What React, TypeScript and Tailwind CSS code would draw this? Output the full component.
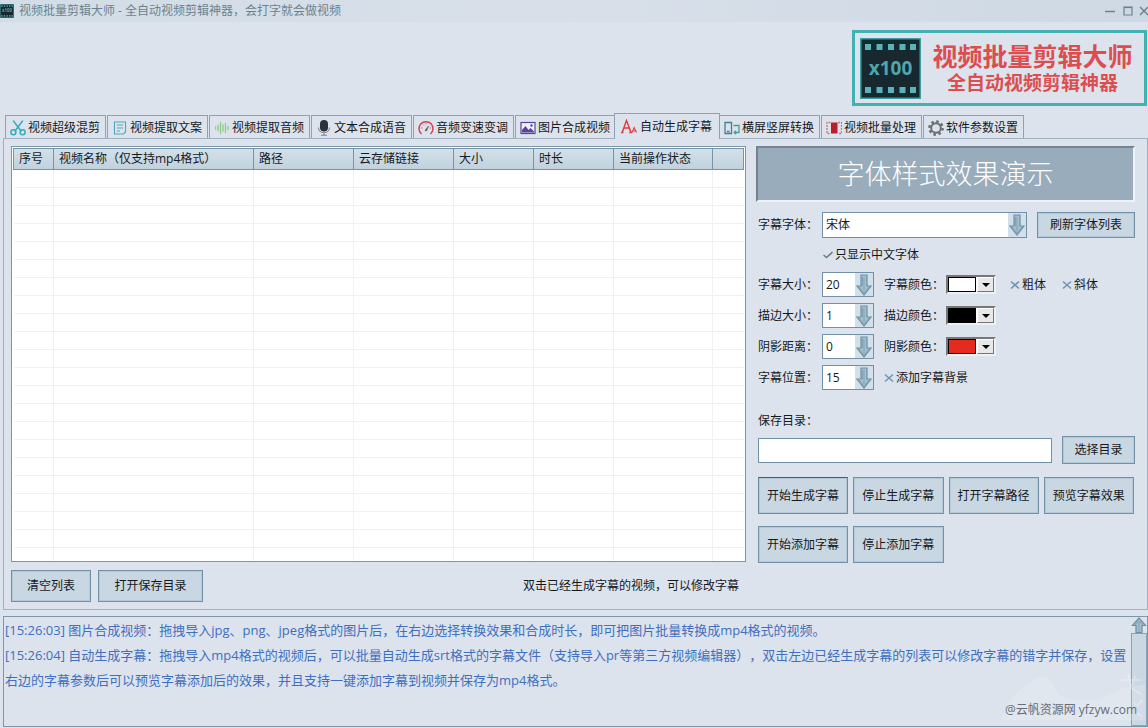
import { useState } from "react";
import type { ReactNode } from "react";

const frame = "border-[#7c97aa]";

function FilmLogo({ className }: { className: string }) {
  const holes = [5, 16.5, 28, 39.5, 50];
  return (
    <svg viewBox="0 0 61 61" className={className} aria-hidden="true">
      <rect x="0.75" y="0.75" width="59.5" height="59.5" fill="#17282f" stroke="#3c9fa3" strokeWidth="1.5" />
      {holes.map((x) => (
        <g key={x} fill="#58b4b8">
          <rect x={x} y="6" width="6" height="6" />
          <rect x={x} y="49" width="6" height="6" />
        </g>
      ))}
      <text x="30.5" y="37" textAnchor="middle" fontSize="19" fontWeight="700" fill="#4fa5ab">
        x100
      </text>
    </svg>
  );
}

const icons: Record<string, ReactNode> = {
  scissors: (
    <g fill="none" stroke="#35aebb" strokeWidth="1.5">
      <path d="M3.5 1 11 11M12.5 1 5 11" strokeLinecap="round" />
      <circle cx="3.4" cy="12.2" r="2.5" />
      <circle cx="12.6" cy="12.2" r="2.5" />
    </g>
  ),
  doc: (
    <g fill="none" stroke="#4aa9bd" strokeWidth="1.1">
      <path d="M2.5 2h11v10l-2 2h-9zM5 5h6M5 8h6M5 11h3" />
    </g>
  ),
  wave: (
    <path d="M1.5 7v2M4 5.5v5M6.5 2.5v11M9 5v6M11.5 3.5v9M14 6.5v3" stroke="#8fd08a" strokeWidth="1.4" strokeLinecap="round" />
  ),
  mic: (
    <g>
      <rect x="4" y="0" width="8" height="11.5" rx="4" fill="#2c3237" />
      <path d="M2.5 7.5c0 7 11 7 11 0M8 12.5V15M5 15.3h6" fill="none" stroke="#7b838a" strokeWidth="1.1" />
    </g>
  ),
  gauge: (
    <g fill="none" stroke="#cf4650">
      <path d="M3.5 14A7 7 0 1 1 12.5 14" strokeWidth="1.5" />
      <path d="M3 8h1.5M5 4.5l1 1M8 3v1.5M13 8h-1.5" strokeWidth="0.8" />
      <path d="M7 10.5 10.5 6 8.5 11z" fill="#555" stroke="#555" strokeWidth="0.6" />
    </g>
  ),
  image: (
    <g>
      <rect x="1" y="2.5" width="14" height="11" fill="#f0effa" stroke="#54479b" strokeWidth="1.2" />
      <path d="M2 12.5V10l3.5-4 3 4 2-2 3.5 3.5v1z" fill="#54479b" />
      <circle cx="11.5" cy="5.5" r="1.2" fill="#54479b" />
    </g>
  ),
  letters: (
    <g fill="none" stroke="#df3e3e">
      <path d="M1.2 13.5 5.5 1.5 10 13.5M2.8 9h5.4M0 13.5h2.5M8.3 13.5H11" strokeWidth="1.5" />
      <path d="M11 13.5 13.2 8.5 15.5 13.5M12 12h2.4" strokeWidth="1.1" />
    </g>
  ),
  screens: (
    <g fill="none" strokeWidth="1.3">
      <path d="M1 2.500h6.500v11H1zM3 11.500h2.500" stroke="#3d8297" />
      <path d="M9.500 5.500H15v7h-4.500M12 10.800 10.200 12.500 12 14.200" stroke="#45a193" />
    </g>
  ),
  film: (
    <g>
      <rect x="5" y="2.5" width="6.5" height="11" fill="#b81f2a" />
      <path d="M4.5 2.5H1v11h3.5M12 2.5h3.5v11H12" fill="none" stroke="#d9737a" strokeWidth="1.3" strokeDasharray="2 1" />
    </g>
  ),
  gear: (
    <g fill="none" stroke="#686c70">
      <circle cx="8" cy="8" r="4.8" strokeWidth="1.9" />
      <circle cx="8" cy="8" r="6.6" strokeWidth="2.4" strokeDasharray="2.6 2.583" />
    </g>
  ),
};

const tabs = [
  ["scissors", "视频超级混剪"],
  ["doc", "视频提取文案"],
  ["wave", "视频提取音频"],
  ["mic", "文本合成语音"],
  ["gauge", "音频变速变调"],
  ["image", "图片合成视频"],
  ["letters", "自动生成字幕"],
  ["screens", "横屏竖屏转换"],
  ["film", "视频批量处理"],
  ["gear", "软件参数设置"],
];

function TabBar() {
  const [active, setActive] = useState(6);
  return (
    <div role="tablist" className="flex items-end gap-px pl-[5px]">
      {tabs.map(([icon, label], i) => (
        <button
          key={label}
          type="button"
          role="tab"
          aria-selected={i === active}
          onClick={() => setActive(i)}
          className={
            i === active
              ? "relative z-10 -mr-0.5 -mb-px -ml-[3px] flex h-[26px] w-[106px] shrink-0 items-center gap-[3px] border border-b-0 border-[#8ba3b8] bg-[#dce3ec] pl-1.5 whitespace-nowrap"
              : "flex h-[23px] w-[101px] shrink-0 items-center gap-0.5 border border-b-0 border-[#8ba3b8] bg-[#dce3ec] pt-px pl-1 whitespace-nowrap"
          }
        >
          <svg viewBox="0 0 16 16" className="size-4 shrink-0" aria-hidden="true">
            {icons[icon]}
          </svg>
          {label}
        </button>
      ))}
    </div>
  );
}

const columns = [
  ["序号", "w-10"],
  ["视频名称（仅支持mp4格式）", "w-[200px]"],
  ["路径", "w-[100px]"],
  ["云存储链接", "w-[100px]"],
  ["大小", "w-20"],
  ["时长", "w-20"],
  ["当前操作状态", "w-[99px]"],
  ["", ""],
];

function VideoTable() {
  return (
    <div className={`h-[416px] overflow-hidden border bg-white p-px ${frame}`}>
      <table className="w-full table-fixed border-collapse">
        <thead>
          <tr className="h-[21px] bg-linear-to-b from-[#d3e0e9] to-[#c0d1dd]">
            {columns.map(([label, width]) => (
              <th
                key={label}
                scope="col"
                className={`border border-[#7793a8] p-0 pl-[5px] text-left font-normal whitespace-nowrap ${width}`}
              >
                {label}
              </th>
            ))}
          </tr>
        </thead>
        <tbody>
          {Array.from({ length: 22 }, (_, r) => (
            <tr key={r} className="h-[18px]">
              {columns.map(([label]) => (
                <td key={label} className="border-r border-b border-[#f0f1f3] p-0 last:border-r-0" />
              ))}
            </tr>
          ))}
        </tbody>
      </table>
    </div>
  );
}

function ActionButton({ children, className, strong }: { children: ReactNode; className: string; strong?: boolean }) {
  return (
    <button
      type="button"
      className={`shrink-0 border bg-[#c9d7e3] whitespace-nowrap shadow-[inset_1px_1px_0_#b4c9d7,inset_-1px_-1px_0_#b4c9d7] ${
        strong ? "border-[#6d8ba0] border-t-[#3f6269]" : "border-[#7391a6]"
      } ${className}`}
    >
      {children}
    </button>
  );
}

function Arrow({ className }: { className: string }) {
  return (
    <svg viewBox="0 0 16 22" className={className} aria-hidden="true">
      <path d="M5 1h6v11h4l-7 9-7-9h4z" fill="#a5bfce" stroke="#6c8fa3" strokeWidth="1.2" />
      <path d="M8 3v14M6.5 3v9M3 13l5 6 5-6" fill="none" stroke="#7e9fb2" strokeWidth="0.9" />
    </svg>
  );
}

function ScrollArrow() {
  return (
    <svg viewBox="0 0 16 16" className="size-4" aria-hidden="true">
      <path d="M8 1 14.5 8.500H11V15.500H5V8.500H1.500z" fill="#a5bfce" stroke="#6c8fa3" strokeWidth="1.2" />
      <path d="M8 4v11M4 8l4-4 4 4" fill="none" stroke="#7e9fb2" strokeWidth="0.9" />
    </svg>
  );
}

function DropDown({ id, options, className }: { id: string; options: string[]; className: string }) {
  return (
    <div className={`grid border border-[#7391a6] bg-white ${className}`}>
      <select id={id} className="col-start-1 row-start-1 w-full appearance-none bg-transparent pl-[3px] outline-none">
        {options.map((o) => (
          <option key={o}>{o}</option>
        ))}
      </select>
      <span className="pointer-events-none col-start-1 row-start-1 flex w-[18px] items-center justify-center justify-self-end bg-[#d2e0ea]">
        <Arrow className="h-[22px] w-4" />
      </span>
    </div>
  );
}

function ColorPicker({ id, swatch }: { id: string; swatch: string }) {
  return (
    <button
      id={id}
      type="button"
      className="flex h-[19px] w-[50px] border-2 border-t-[#777] border-r-[#eef0f2] border-b-[#eef0f2] border-l-[#777] bg-white"
    >
      <span className={`h-full w-7 border border-black ${swatch}`} />
      <span className="ml-px flex h-full flex-1 items-center justify-center border border-t-white border-r-[#777] border-b-[#777] border-l-white bg-[#e8e8e8]">
        <svg viewBox="0 0 8 4" className="h-1 w-2" aria-hidden="true">
          <path d="M0 0h8L4 4z" />
        </svg>
      </span>
    </button>
  );
}

function Tick({ label, initial = false }: { label: string; initial?: boolean }) {
  const [on, setOn] = useState(initial);
  return (
    <label className="flex items-center gap-0.5 whitespace-nowrap">
      <span className="grid size-[10px]">
        <input
          type="checkbox"
          checked={on}
          onChange={() => setOn(!on)}
          className="col-start-1 row-start-1 size-[10px] appearance-none"
        />
        <svg viewBox="0 0 10 10" className="pointer-events-none col-start-1 row-start-1 size-[10px]" aria-hidden="true">
          <path
            d={on ? "M0.5 5 3.5 7.5 9.5 2" : "M1 1.5 9 8.5M9 1.5 1 8.5"}
            fill="none"
            stroke={on ? "#62808c" : "#6d95b3"}
            strokeWidth="1.6"
          />
        </svg>
      </span>
      {label}
    </label>
  );
}

function SizeRow({ id, label, value, children }: { id: string; label: string; value: string; children: ReactNode }) {
  return (
    <div className="flex h-[25px] items-center">
      <label htmlFor={id} className="w-16 shrink-0">
        {label}
      </label>
      <DropDown id={id} options={[value]} className="h-[25px] w-[52px] shrink-0" />
      <div className="flex items-center pl-[10px]">{children}</div>
    </div>
  );
}

function ColorField({ id, label, swatch }: { id: string; label: string; swatch: string }) {
  return (
    <>
      <label htmlFor={id} className="w-[62px]">
        {label}
      </label>
      <ColorPicker id={id} swatch={swatch} />
    </>
  );
}

function Settings() {
  return (
    <section className="flex w-[379px] shrink-0 flex-col">
      <div className="flex h-14 items-center justify-center border-2 border-t-[#74838d] border-r-[#eef2f6] border-b-[#eef2f6] border-l-[#74838d] bg-[#98acbc] text-[27px] font-light text-white">
        字体样式效果演示
      </div>
      <div className="flex flex-col pl-0.5">
        <div className="mt-[10px] flex items-center">
          <label htmlFor="font" className="w-16 shrink-0">
            字幕字体：
          </label>
          <DropDown id="font" options={["宋体"]} className="h-[26px] flex-1" />
          <ActionButton className="ml-[10px] h-[26px] w-[98px]">刷新字体列表</ActionButton>
        </div>
        <div className="flex h-[34px] items-center pl-[65px]">
          <Tick label="只显示中文字体" initial />
        </div>
        <div className="flex flex-col gap-1.5">
          <SizeRow id="size" label="字幕大小：" value="20">
            <ColorField id="size-color" label="字幕颜色：" swatch="bg-white" />
            <div className="ml-3.5 flex gap-4">
              <Tick label="粗体" />
              <Tick label="斜体" />
            </div>
          </SizeRow>
          <SizeRow id="outline" label="描边大小：" value="1">
            <ColorField id="outline-color" label="描边颜色：" swatch="bg-black" />
          </SizeRow>
          <SizeRow id="shadow" label="阴影距离：" value="0">
            <ColorField id="shadow-color" label="阴影颜色：" swatch="bg-[#e52b20]" />
          </SizeRow>
          <SizeRow id="position" label="字幕位置：" value="15">
            <Tick label="添加字幕背景" />
          </SizeRow>
        </div>
        <label htmlFor="folder" className="mt-[21px] h-[25px] leading-5">
          保存目录：
        </label>
        <div className="flex items-center gap-[10px]">
          <input id="folder" type="text" className="h-[25px] min-w-0 flex-1 border border-[#7391a6] bg-white px-1 outline-none" />
          <ActionButton className="h-7 w-[73px]">选择目录</ActionButton>
        </div>
        <div className="mt-[13px] grid grid-cols-4 gap-x-[5px] gap-y-3 pr-px">
          <ActionButton strong className="h-[37px]">开始生成字幕</ActionButton>
          <ActionButton className="h-[37px]">停止生成字幕</ActionButton>
          <ActionButton className="h-[37px]">打开字幕路径</ActionButton>
          <ActionButton className="h-[37px]">预览字幕效果</ActionButton>
          <ActionButton className="h-[37px]">开始添加字幕</ActionButton>
          <ActionButton className="h-[37px]">停止添加字幕</ActionButton>
        </div>
      </div>
    </section>
  );
}

function LogPanel() {
  return (
    <section className={`relative mt-1.5 mb-px ml-[3px] flex h-[111px] border ${frame}`}>
      <div className="flex-1 pt-px pr-1 pl-px text-[13px] leading-[25px] text-[#3f6fbe] [text-spacing-trim:space-all]">
        <p>[15:26:03] 图片合成视频：拖拽导入jpg、png、jpeg格式的图片后，在右边选择转换效果和合成时长，即可把图片批量转换成mp4格式的视频。</p>
        <p>
          [15:26:04] 自动生成字幕：拖拽导入mp4格式的视频后，可以批量自动生成srt格式的字幕文件（支持导入pr等第三方视频编辑器），双击左边已经生成字幕的列表可以修改字幕的错字并保存，设置右边的字幕参数后可以预览字幕添加后的效果，并且支持一键添加字幕到视频并保存为mp4格式。
        </p>
      </div>
      <div className="flex w-4 flex-col">
        <ScrollArrow />
        <div className="flex-1 border border-[#8aa4b7] bg-[#cbd8e4]" />
      </div>
      <svg viewBox="0 0 160 90" className="pointer-events-none absolute right-0 bottom-0 h-[90px] w-40" aria-hidden="true">
        <path d="M14 84C20 62 34 50 56 40l8 4 8 16 14 4 26 0 24-12 22-4v36z" fill="#ffffff" opacity="0.14" />
        <path
          d="M134 44h20M141 38l3 12M148 40l-4 12 10 6M146 66l5 4 4-6M148 76l7 4"
          fill="none"
          stroke="#ffffff"
          strokeWidth="1.5"
          opacity="0.35"
        />
      </svg>
      <span className="absolute right-[10px] bottom-2 text-xs leading-4 text-[#666d75]">@云帆资源网 yfzyw.com</span>
    </section>
  );
}

export default function App() {
  return (
    <div className="flex min-h-screen flex-col overflow-x-hidden bg-[#dce3ec] font-['Open_Sans','Noto_Sans_CJK_SC',sans-serif] text-xs text-[#15191d]">
      <header className="flex h-[22px] items-center bg-linear-to-r from-[#d2dde7] via-[#d8dfe9] to-[#ced9e4] text-[#6c828f]">
        <FilmLogo className="h-[14px] w-[14px]" />
        <h1 className="ml-[5px] flex-1">视频批量剪辑大师 - 全自动视频剪辑神器，会打字就会做视频</h1>
        <div className="-mr-px flex items-center gap-2">
          <button type="button" aria-label="最小化">
            <svg viewBox="0 0 10 10" className="size-[10px]" fill="none" stroke="currentColor" strokeWidth="1.5">
              <path d="M0 5.5h10" />
            </svg>
          </button>
          <button type="button" aria-label="最大化">
            <svg viewBox="0 0 10 10" className="size-[10px]" fill="none" stroke="currentColor" strokeWidth="1.2">
              <path d="M1 1h8v8H1z" />
              <path d="M1 1.5h8" />
            </svg>
          </button>
          <button type="button" aria-label="关闭" className="-ml-0.5">
            <svg viewBox="0 0 10 10" className="size-[10px]" fill="none" stroke="currentColor" strokeWidth="1.5">
              <path d="M1 1l8 8M9 1 1 9" />
            </svg>
          </button>
        </div>
      </header>

      <div className="flex justify-end pt-2 pr-px">
        <div className="flex h-[76px] w-[295px] items-center border-[3px] border-[#43b0b2] pl-[5px]">
          <FilmLogo className="size-[61px] shrink-0" />
          <div className="flex flex-1 flex-col items-center font-['Noto_Sans_CJK_SC',sans-serif] font-bold whitespace-nowrap text-[#dc4d50]">
            <span className="h-[27px] text-[25px] leading-[25px]">视频批量剪辑大师</span>
            <span className="text-[19px] leading-6">全自动视频剪辑神器</span>
          </div>
        </div>
      </div>

      <div className="mt-[7px]">
        <TabBar />
        <main className="ml-[3px] flex flex-col border border-[#a0b1c2] pt-[7px] pr-3 pb-[7px] pl-[7px]">
          <div className="flex gap-[10px]">
            <div className="min-w-0 flex-1">
              <VideoTable />
            </div>
            <Settings />
          </div>
          <div className="mt-[7px] flex items-center gap-[7px]">
            <ActionButton className="h-8 w-20">清空列表</ActionButton>
            <ActionButton className="h-8 w-[105px]">打开保存目录</ActionButton>
            <p className="flex-1 pr-[396px] text-right whitespace-nowrap">双击已经生成字幕的视频，可以修改字幕</p>
          </div>
        </main>
      </div>
      <LogPanel />
    </div>
  );
}
